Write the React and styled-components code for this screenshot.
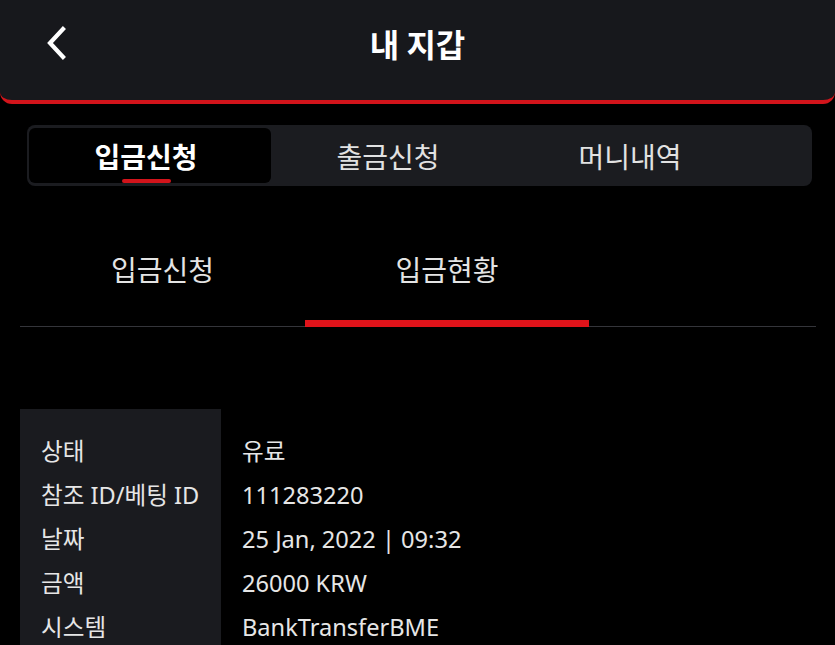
import React from "react";
import styled, { createGlobalStyle } from "styled-components";

const Global = createGlobalStyle`
  html, body { margin: 0; padding: 0; background: #000; }
  body { font-family: "Noto Sans", "Noto Sans CJK KR", sans-serif; color: #e6e6e6; }
  * { box-sizing: border-box; }
`;

const Page = styled.div`
  width: 835px;
  min-height: 645px;
  background: #000;
  overflow: hidden;
`;

const Header = styled.header`
  position: relative;
  height: 104px;
  background: #17181c;
  border-bottom: 4px solid #d2141b;
  border-radius: 0 0 12px 12px;
  display: flex;
  align-items: center;
  justify-content: center;
  padding-bottom: 15px;
`;

const BackButton = styled.button`
  position: absolute;
  left: 38px;
  top: 22px;
  width: 36px;
  height: 42px;
  background: none;
  border: none;
  padding: 0;
  display: flex;
  align-items: center;
  justify-content: center;
`;

const Title = styled.h1`
  margin: 0;
  font-family: "Noto Sans CJK KR", sans-serif;
  font-size: 32px;
  font-weight: 700;
  color: #fff;
  line-height: 1;
`;

const TabBar = styled.nav`
  margin: 21px 23px 0 27px;
  height: 61px;
  background: #1b1c20;
  border-radius: 8px;
  padding: 3px 2px;
  display: flex;
`;

const Tab = styled.div`
  position: relative;
  width: 242px;
  display: flex;
  align-items: center;
  justify-content: center;
  padding-right: 8px;
  border-radius: 6px;
  background: ${(p) => (p.$active ? "#000" : "transparent")};
  font-family: "Noto Sans CJK KR", sans-serif;
  font-size: 28px;
  font-weight: ${(p) => (p.$active ? 700 : 400)};
  color: ${(p) => (p.$active ? "#fff" : "#e2e2e2")};
  line-height: 1;
  &::after {
    content: "";
    display: ${(p) => (p.$active ? "block" : "none")};
    position: absolute;
    left: 93px;
    bottom: 0px;
    width: 49px;
    height: 4px;
    border-radius: 2px;
    background: #d2141b;
  }
`;

const SubTabs = styled.div`
  margin: 25px 19px 0 20px;
  height: 116px;
  border-bottom: 1px solid #34353a;
  display: flex;
`;

const SubTab = styled.div`
  position: relative;
  width: 284px;
  display: flex;
  align-items: center;
  justify-content: center;
  font-family: "Noto Sans CJK KR", sans-serif;
  font-size: 28px;
  color: #e4e4e4;
  line-height: 1;
  padding-top: 1px;
  &:first-child { width: 285px; }
  &::after {
    content: "";
    display: ${(p) => (p.$active ? "block" : "none")};
    position: absolute;
    left: 0;
    right: 0;
    bottom: -1px;
    height: 7px;
    background: #e0131a;
  }
`;

const Table = styled.div`
  margin: 82px 0 0 20px;
  display: grid;
  grid-template-columns: 201px 1fr;
`;

const LabelCol = styled.div`
  background: #1a1b1f;
  padding: 21px 0 0 21px;
`;

const ValueCol = styled.div`
  padding: 21px 0 0 21px;
`;

const Cell = styled.div`
  height: 44px;
  display: flex;
  align-items: center;
  font-size: 23.6px;
  color: #e6e6e6;
  white-space: nowrap;
  line-height: 1;
`;

const rows = [
  ["상태", "유료"],
  ["참조 ID/베팅 ID", "111283220"],
  ["날짜", "25 Jan, 2022 | 09:32"],
  ["금액", "26000 KRW"],
  ["시스템", "BankTransferBME"],
];

export default function App() {
  return (
    <Page>
      <Global />
      <Header>
        <BackButton aria-label="back">
          <svg width="22" height="34" viewBox="0 0 22 34">
            <polyline points="18,3 5,17 18,31" fill="none" stroke="#fff" strokeWidth="4.2" strokeLinecap="square" />
          </svg>
        </BackButton>
        <Title>내 지갑</Title>
      </Header>
      <TabBar>
        <Tab $active>입금신청</Tab>
        <Tab>출금신청</Tab>
        <Tab>머니내역</Tab>
      </TabBar>
      <SubTabs>
        <SubTab>입금신청</SubTab>
        <SubTab $active>입금현황</SubTab>
      </SubTabs>
      <Table>
        <LabelCol>
          {rows.map(([l]) => (
            <Cell key={l}>{l}</Cell>
          ))}
        </LabelCol>
        <ValueCol>
          {rows.map(([l, v]) => (
            <Cell key={l}>{v}</Cell>
          ))}
        </ValueCol>
      </Table>
    </Page>
  );
}
